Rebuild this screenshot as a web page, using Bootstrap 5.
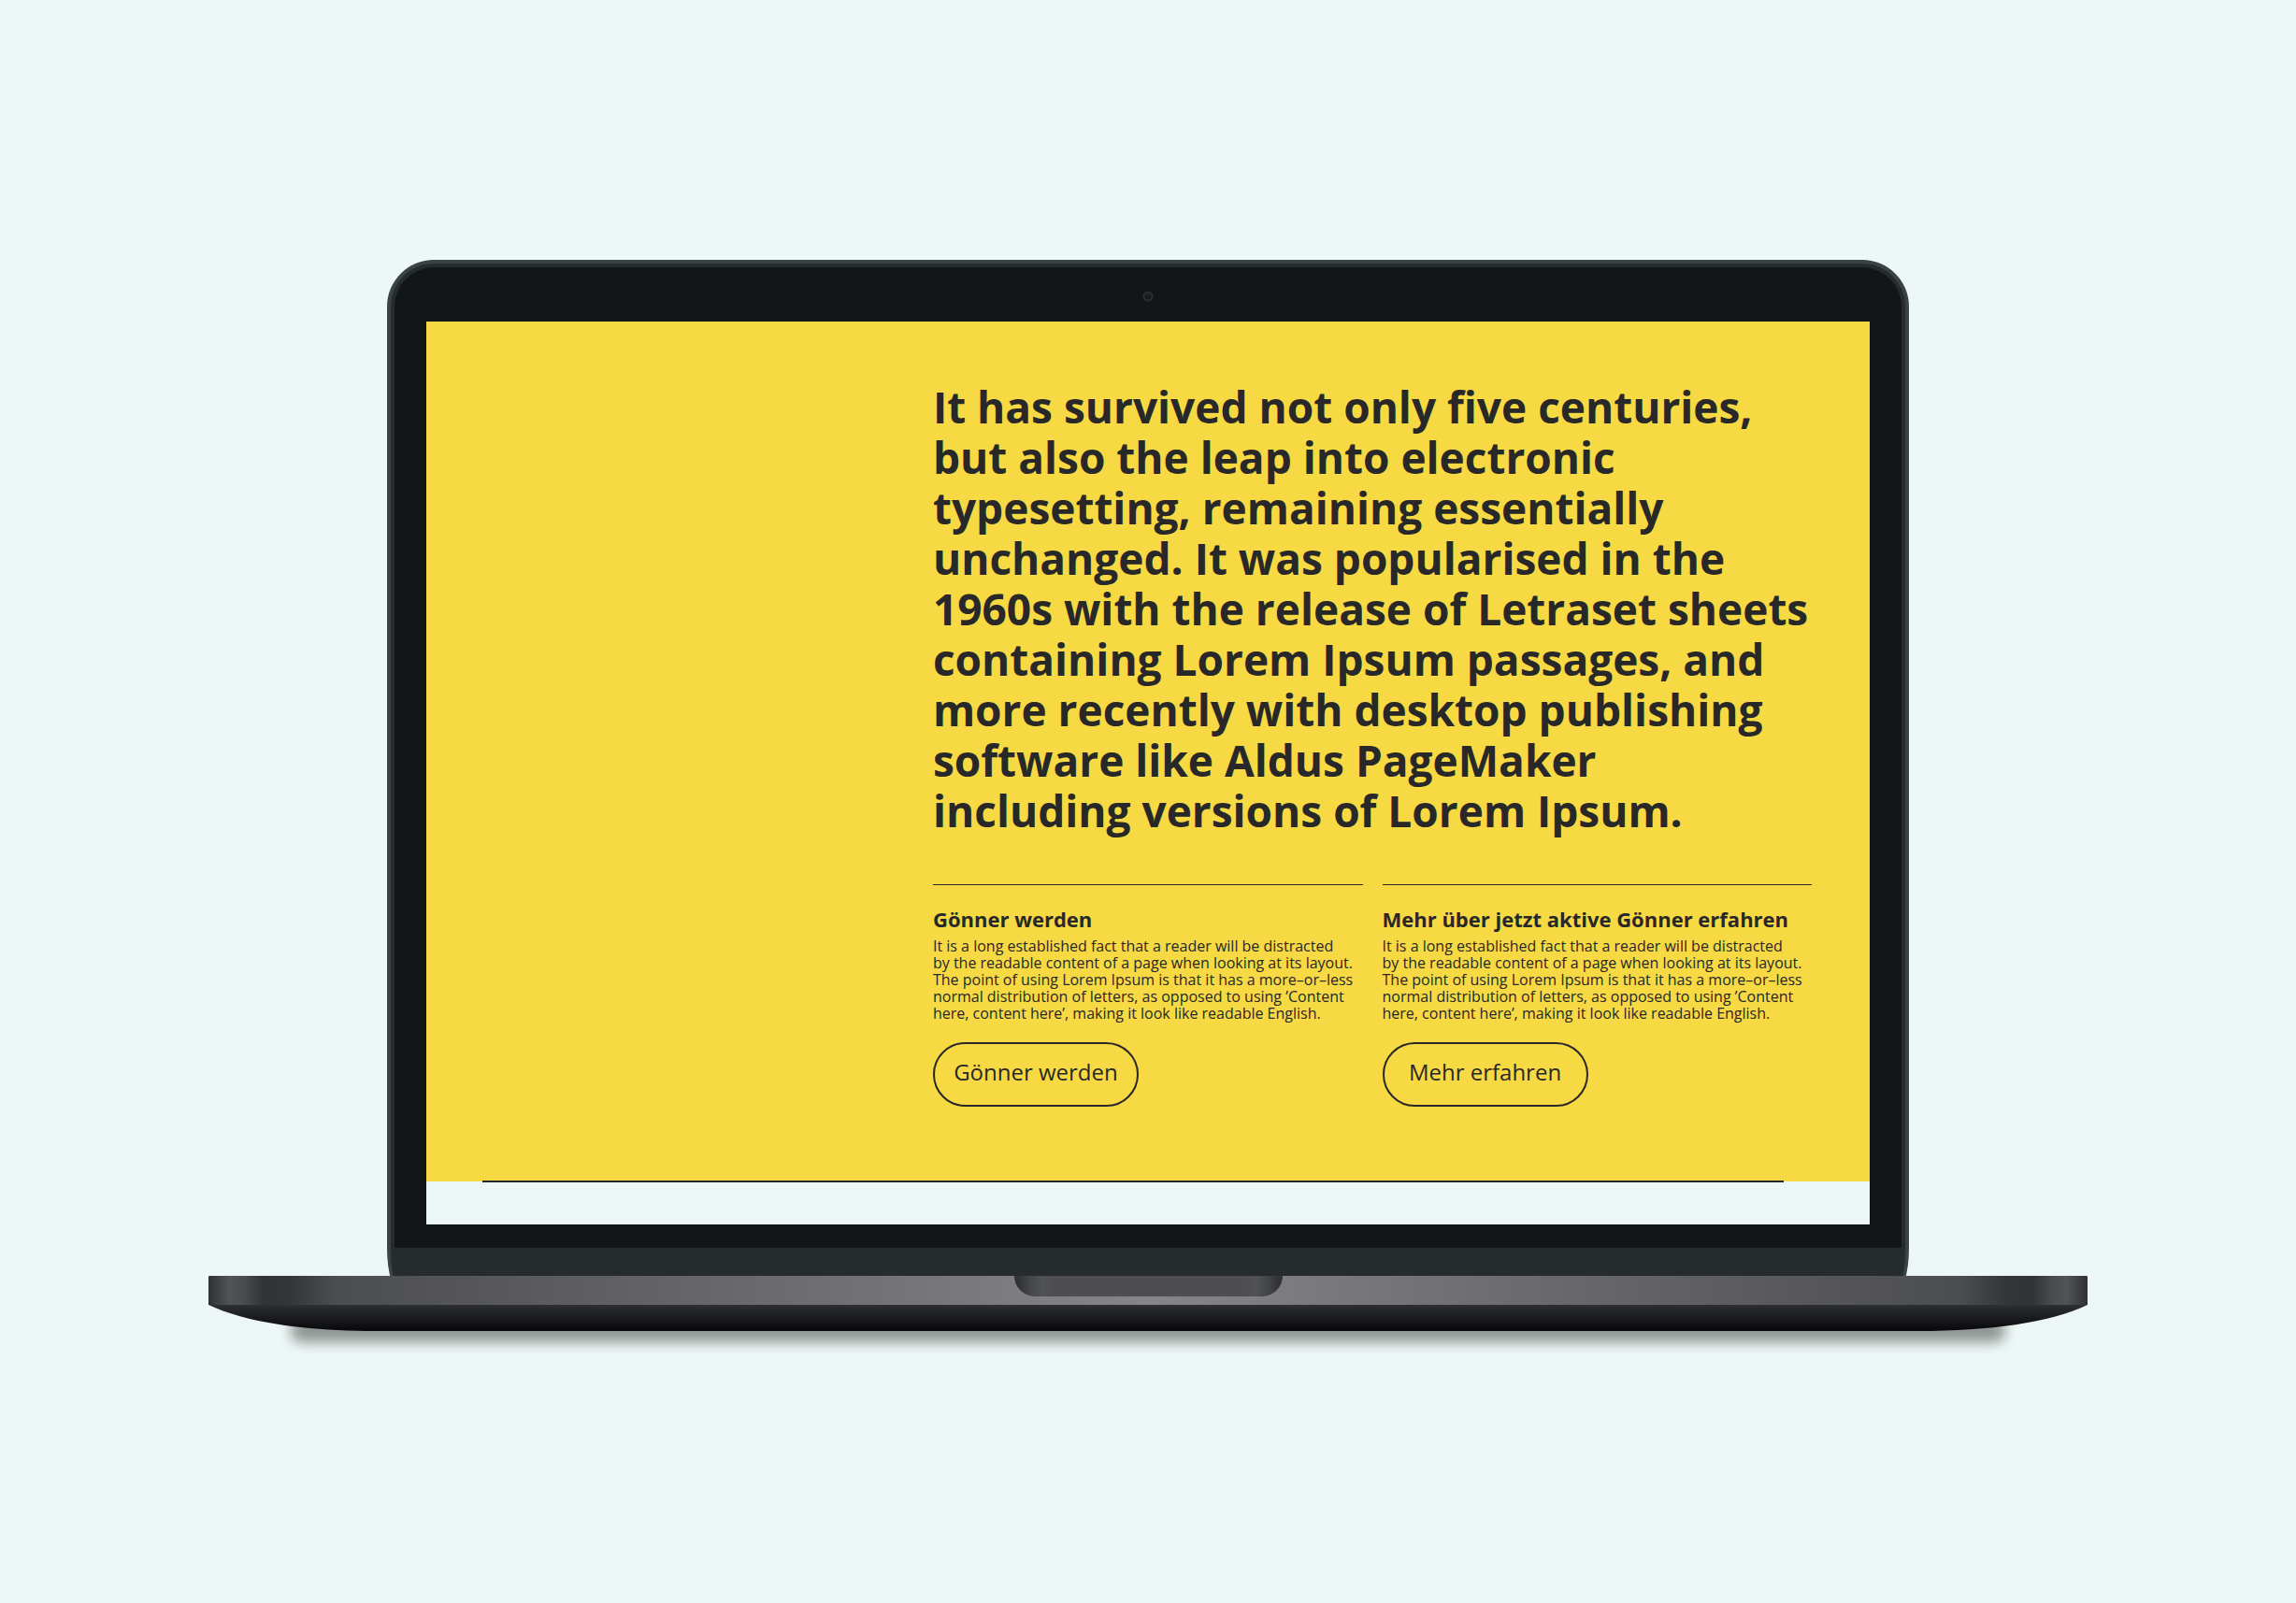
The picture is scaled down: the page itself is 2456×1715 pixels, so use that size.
<!DOCTYPE html>
<html lang="de">
<head>
<meta charset="utf-8">
<meta name="viewport" content="width=device-width, initial-scale=1">
<title>Gönner werden</title>
<link href="https://cdn.jsdelivr.net/npm/bootstrap@5.3.0/dist/css/bootstrap.min.css" rel="stylesheet">
<style>
  :root { --ink: #282828; --mint: #edf7f5; --sun: #f7d944; }
  body { background: var(--mint); color: var(--ink); font-family: "Open Sans", sans-serif; }

  .stage { padding: 278px 24px 0; }
  .laptop { max-width: 2010px; }

  /* lid: two thin metal edges round the black bezel */
  .lid { width: 81%; border-radius: 50px 50px 16px 16px / 50px 50px 50px 50px; background: #3a4245; padding: 4px 4px 0; margin-bottom: -20px; }
  .lid-rim { border-radius: 46px 46px 14px 14px / 46px 46px 48px 48px; background: #262b2e; padding: 4px 4px 50px; }
  .bezel { border-radius: 42px 42px 0 0; background: #121616; padding: 0 34px 25px; }
  .camera-row { height: 58px; padding-top: 4px; }
  .display { background: var(--mint); }

  /* page on the display */
  .hero { background: var(--sun); padding: 64px 62px 80px 542px; }
  .claim { font-size: 46px; line-height: 54px; font-weight: 700; margin-bottom: 52px; }
  .offers { --bs-gutter-x: 21px; }
  .offer { border-top: 1px solid var(--ink); padding-top: 23px; }
  .offer-title { font-size: 22px; line-height: 26px; font-weight: 700; margin-bottom: 7px; }
  .offer-text { font-size: 16px; line-height: 18px; margin-bottom: 22px; }
  .btn-outline { width: 220px; height: 69px; padding: 0 0 6px; border: 2px solid var(--ink); color: var(--ink); font-size: 24px; line-height: 32px; }
  .btn-outline:hover { background: var(--ink); color: var(--sun); }
  .divider { height: 2px; margin: -1px 92px 45px 60px; background: var(--ink); opacity: 1; border: 0; }

  /* base */
  .deck { z-index: 1; }
  .deck-top { height: 31px; background: linear-gradient(90deg, #2f3033 0, #525357 22px, #4b4c4f 38px, #323336 58px, #343538 86px, #4c4d50 136px, #85858a 50%, #4c4d50 calc(100% - 136px), #343538 calc(100% - 86px), #323336 calc(100% - 58px), #4b4c4f calc(100% - 38px), #525357 calc(100% - 22px), #2f3033 100%); border-radius: 1px 1px 0 0; }
  .notch { width: 287px; height: 22px; border-radius: 0 0 22px 22px; background: linear-gradient(90deg, #2c2d30 0, #46474a 18px, #525357 30px, #4d4d52 40px, #4d4d52 calc(100% - 40px), #525357 calc(100% - 30px), #46474a calc(100% - 18px), #2c2d30 100%); }
  .deck-bottom { height: 28px; }
  .ground { left: 88px; right: 88px; bottom: -12px; height: 26px; background: #000; opacity: .4; filter: blur(7px); border-radius: 12px; z-index: -1; }

  @media (max-width: 1800px) {
    .hero { padding: 48px 24px; }
    .claim { font-size: 32px; line-height: 40px; }
    .claim br { display: none; }
    .stage { padding-top: 80px; }
  }
</style>
<script src="https://cdn.jsdelivr.net/npm/bootstrap@5.3.0/dist/js/bootstrap.bundle.min.js"></script>
</head>
<body>
<main class="stage min-vh-100">
  <div class="laptop mx-auto">
    <div class="lid mx-auto">
      <div class="lid-rim">
        <div class="bezel">
          <div class="camera-row d-flex align-items-center justify-content-center">
            <svg width="12" height="12" viewBox="0 0 12 12" aria-hidden="true"><circle cx="6" cy="6" r="4.5" fill="#151a1b" stroke="#2a2e2f" stroke-width="2"/><rect x="5.4" y="3.4" width="1.2" height="2" fill="#303536"/></svg>
          </div>
          <div class="display overflow-hidden">
            <section class="hero">
              <h1 class="claim">It has survived not only five centuries,<br> but also the leap into electronic<br> typesetting, remaining essentially<br> unchanged. It was popularised in the<br> 1960s with the release of Letraset sheets<br> containing Lorem Ipsum passages, and<br> more recently with desktop publishing<br> software like Aldus PageMaker<br> including versions of Lorem Ipsum.</h1>
              <div class="row offers">
                <div class="col-12 col-xl-6">
                  <article class="offer">
                    <h2 class="offer-title">Gönner werden</h2>
                    <p class="offer-text">It is a long established fact that a reader will be distracted<br> by the readable content of a page when looking at its layout.<br> The point of using Lorem Ipsum is that it has a more–or–less<br> normal distribution of letters, as opposed to using ’Content<br> here, content here’, making it look like readable English.</p>
                    <button type="button" class="btn btn-outline rounded-pill d-block">Gönner werden</button>
                  </article>
                </div>
                <div class="col-12 col-xl-6">
                  <article class="offer">
                    <h2 class="offer-title">Mehr über jetzt aktive Gönner erfahren</h2>
                    <p class="offer-text">It is a long established fact that a reader will be distracted<br> by the readable content of a page when looking at its layout.<br> The point of using Lorem Ipsum is that it has a more–or–less<br> normal distribution of letters, as opposed to using ’Content<br> here, content here’, making it look like readable English.</p>
                    <button type="button" class="btn btn-outline rounded-pill d-block">Mehr erfahren</button>
                  </article>
                </div>
              </div>
            </section>
            <hr class="divider">
          </div>
        </div>
      </div>
    </div>
    <div class="deck position-relative">
      <div class="deck-top"><div class="notch mx-auto"></div></div>
      <svg class="deck-bottom d-block w-100" viewBox="0 0 2010 28" preserveAspectRatio="none" aria-hidden="true">
        <defs><linearGradient id="under" x1="0" y1="0" x2="0" y2="1"><stop offset="0" stop-color="#2e2f33"/><stop offset=".5" stop-color="#1a1b1e"/><stop offset="1" stop-color="#08080a"/></linearGradient></defs>
        <path d="M0 0H2010C1970 19 1905 28 1830 28H180C105 28 40 19 0 0Z" fill="url(#under)"/>
      </svg>
      <div class="ground position-absolute"></div>
    </div>
  </div>
</main>
</body>
</html>
